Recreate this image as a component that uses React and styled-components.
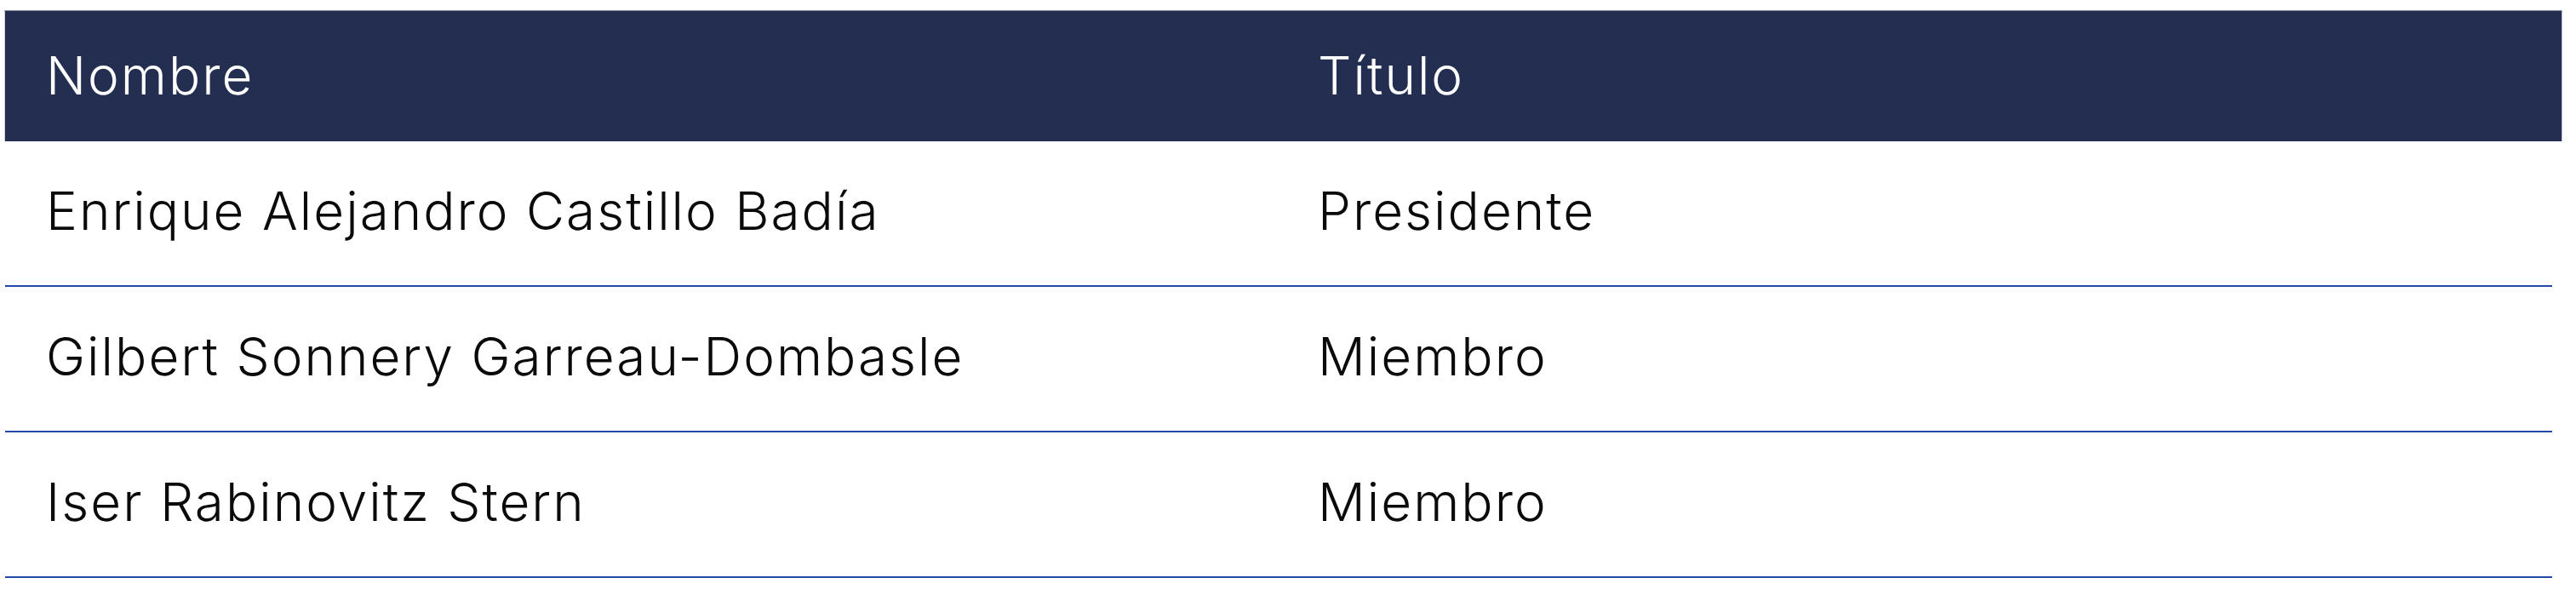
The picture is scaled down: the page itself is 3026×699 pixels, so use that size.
import React from "react";
import styled, { createGlobalStyle } from "styled-components";

const GlobalStyle = createGlobalStyle`
  html, body {
    margin: 0;
    padding: 0;
    background: #ffffff;
  }
  body {
    font-family: "Inter", "Liberation Sans", sans-serif;
  }
`;

const Page = styled.div`
  padding: 12px 0 0 5px;
  width: 3026px;
  box-sizing: border-box;
`;

const Table = styled.div`
  display: flex;
  flex-direction: column;
  width: 3005px;
`;

const HeaderRow = styled.div`
  display: grid;
  grid-template-columns: 1494px 1fr;
  align-items: center;
  height: 153px;
  background: #232e50;
  border-top: 1px solid #7d8294;
  border-left: 1px solid #c9ccd4;
  border-right: 1px solid #b9bdd6;
`;

const BodyRow = styled.div`
  display: grid;
  grid-template-columns: 1494px 1fr;
  align-items: center;
  height: 169px;
  width: 2992px;
  margin-left: 1px;
  border-bottom: 2px solid #2449a5;
`;

const Cell = styled.div`
  padding-left: 48px;
  padding-bottom: ${(p) => (p.$head ? "2px" : "6px")};
  font-family: "Inter", "Liberation Sans", sans-serif;
  font-weight: 300;
  font-size: 62px;
  line-height: 1;
  letter-spacing: 2px;
  color: ${(p) => (p.$head ? "#ffffff" : "#0a0a0a")};
  white-space: nowrap;
`;

const rows = [
  { name: "Enrique Alejandro Castillo Badía", title: "Presidente" },
  { name: "Gilbert Sonnery Garreau-Dombasle", title: "Miembro" },
  { name: "Iser Rabinovitz Stern", title: "Miembro" },
];

export default function App() {
  return (
    <>
      <GlobalStyle />
      <Page>
        <Table>
          <HeaderRow>
            <Cell $head>Nombre</Cell>
            <Cell $head>Título</Cell>
          </HeaderRow>
          {rows.map((r) => (
            <BodyRow key={r.name}>
              <Cell>{r.name}</Cell>
              <Cell>{r.title}</Cell>
            </BodyRow>
          ))}
        </Table>
      </Page>
    </>
  );
}
